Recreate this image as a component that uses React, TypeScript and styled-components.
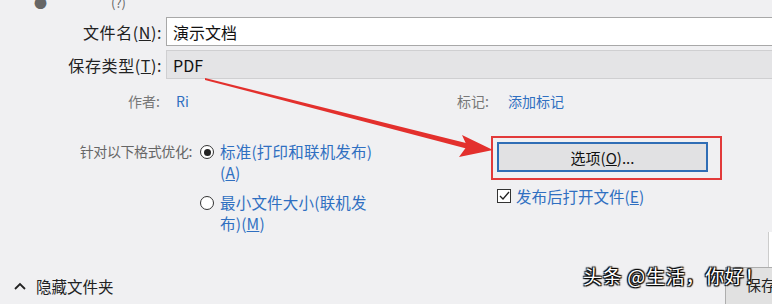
import React, { FC } from 'react';
import styled, { createGlobalStyle } from 'styled-components';

const GlobalStyle = createGlobalStyle`
  html, body {
    margin: 0;
    padding: 0;
    background: #f0f0f2;
  }
  body {
    font-family: "Noto Sans CJK SC", "Noto Sans", sans-serif;
  }
`;

const Dialog = styled.div`
  position: relative;
  width: 772px;
  height: 304px;
  overflow: hidden;
  background: #f0f0f2;
  color: #1a1a1a;
  font-size: 15px;
`;

const TopStrip = styled.div`
  height: 17px;
  display: flex;
  align-items: flex-start;
  padding-left: 34px;
  gap: 64px;
  color: #666;
  font-size: 13px;
  line-height: 6px;
  overflow: hidden;
`;

const FormGrid = styled.div`
  display: grid;
  grid-template-columns: 166px 1fr;
  row-gap: 4px;
`;

const Label = styled.div`
  display: flex;
  align-items: center;
  justify-content: flex-end;
  padding-right: 4px;
  color: #222;
  font-size: 16px;
  letter-spacing: 0.6px;
  white-space: pre;
`;

const Field = styled.div<{ $readonly?: boolean }>`
  height: 27px;
  display: flex;
  align-items: center;
  padding-left: 6px;
  background: ${(p) => (p.$readonly ? '#e4e4e6' : '#ffffff')};
  border: 1px solid ${(p) => (p.$readonly ? '#cfcfd1' : '#a8a8a8')};
  border-right: none;
  font-size: 16px;
  color: #111;
`;

const MetaRow = styled.div`
  display: grid;
  grid-template-columns: 166px 291px 51px 1fr;
  margin-top: 10px;
  height: 24px;
  align-items: center;
  font-size: 14px;
`;

const MetaLabel = styled.div<{ $align?: string }>`
  text-align: ${(p) => p.$align || 'right'};
  padding-right: ${(p) => (p.$align === 'left' ? '0' : '6px')};
  color: #777;
`;

const LinkText = styled.span<{ $indent?: number }>`
  color: #2f6fc1;
  padding-left: ${(p) => p.$indent ?? 10}px;
`;

const OptionsArea = styled.div`
  display: flex;
  margin-top: 24px;
`;

const OptionsLabel = styled.div`
  width: 196px;
  text-align: right;
  padding-right: 4px;
  color: #666;
  font-size: 14px;
  line-height: 21px;
  padding-top: 4px;
  letter-spacing: -0.4px;
  box-sizing: border-box;
`;

const RadioList = styled.div`
  width: 295px;
  display: flex;
  flex-direction: column;
  gap: 9px;
  padding-top: 4px;
`;

const RadioItem = styled.div`
  display: flex;
  align-items: flex-start;
  gap: 6px;
`;

const RadioCircle = styled.span<{ $checked?: boolean }>`
  flex: none;
  width: 12px;
  height: 12px;
  margin-top: 4px;
  margin-left: 4px;
  border: 1px solid #333;
  border-radius: 50%;
  background: #fff;
  display: flex;
  align-items: center;
  justify-content: center;
  &::after {
    content: '';
    display: ${(p) => (p.$checked ? 'block' : 'none')};
    width: 7px;
    height: 7px;
    border-radius: 50%;
    background: #222;
  }
`;

const RadioText = styled.span`
  width: 160px;
  color: #2f6fc1;
  font-size: 15.5px;
  line-height: 21px;
  letter-spacing: 0.2px;
`;

const Underline = styled.span`
  text-decoration: underline;
`;

const ActionColumn = styled.div`
  display: flex;
  flex-direction: column;
  gap: 5px;
`;

const Highlight = styled.div`
  width: 231px;
  height: 44px;
  border: 2px solid #e23a3a;
  box-sizing: border-box;
  padding: 4px 12px 6px 4px;
  margin-top: -1px;
`;

const OptionsButton = styled.button`
  width: 100%;
  height: 100%;
  border: 2px solid #2f6db5;
  background: #e1e1e3;
  font-family: inherit;
  font-size: 15px;
  color: #111;
  cursor: pointer;
  padding: 0;
`;

const CheckRow = styled.label`
  display: flex;
  align-items: center;
  gap: 5px;
  padding-left: 6px;
  color: #2f6fc1;
  font-size: 15.5px;
`;

const CheckBox = styled.span`
  width: 12px;
  height: 12px;
  border: 1px solid #333;
  background: #fff;
  display: flex;
  align-items: center;
  justify-content: center;
`;

const Footer = styled.div`
  position: absolute;
  left: 0;
  right: 0;
  bottom: 0;
  height: 38px;
  display: flex;
  align-items: center;
  justify-content: space-between;
`;

const Toggle = styled.div`
  display: flex;
  align-items: center;
  gap: 10px;
  padding-left: 14px;
  padding-top: 2px;
  font-size: 15.5px;
  color: #222;
`;

const SaveButton = styled.div`
  flex: none;
  width: 47px;
  height: 38px;
  margin-top: 2px;
  box-sizing: border-box;
  background: #e1e1e1;
  border: 1px solid #adadad;
  border-right: none;
  padding: 6px 0 0 20px;
  font-size: 15px;
  color: #222;
  white-space: nowrap;
  overflow: hidden;
`;

const Watermark = styled.div`
  position: absolute;
  left: 583px;
  top: 262px;
  font-size: 19px;
  color: #fff;
  letter-spacing: 0.7px;
  text-shadow: 0 0 2px #000, 1px 1px 1px #000, -1px -1px 1px #000, 1px -1px 1px #000, -1px 1px 1px #000;
`;

const SideEdge = styled.div`
  position: absolute;
  right: 0;
  top: 232px;
  width: 3px;
  height: 36px;
  background: #fff;
  border-left: 1px solid #ccc;
`;

const ArrowLayer = styled.svg`
  position: absolute;
  left: 0;
  top: 0;
  pointer-events: none;
`;

const App: FC = () => {
  return (
    <>
      <GlobalStyle />
      <Dialog>
        <TopStrip>
          <span>●</span>
          <span>(?)</span>
        </TopStrip>
        <FormGrid>
          <Label>
            <span>文件名(<Underline>N</Underline>):</span>
          </Label>
          <Field>演示文档</Field>
          <Label>
            <span>保存类型(<Underline>T</Underline>):</span>
          </Label>
          <Field $readonly>PDF</Field>
        </FormGrid>
        <MetaRow>
          <MetaLabel>作者:</MetaLabel>
          <LinkText>Ri</LinkText>
          <MetaLabel $align="left">标记:</MetaLabel>
          <LinkText $indent={0}>添加标记</LinkText>
        </MetaRow>
        <OptionsArea>
          <OptionsLabel>针对以下格式优化:</OptionsLabel>
          <RadioList>
            <RadioItem>
              <RadioCircle $checked />
              <RadioText>
                标准(打印和联机发布)<br />(<Underline>A</Underline>)
              </RadioText>
            </RadioItem>
            <RadioItem>
              <RadioCircle />
              <RadioText>
                最小文件大小(联机发布)(<Underline>M</Underline>)
              </RadioText>
            </RadioItem>
          </RadioList>
          <ActionColumn>
            <Highlight>
              <OptionsButton>
                选项(<Underline>O</Underline>)...
              </OptionsButton>
            </Highlight>
            <CheckRow>
              <CheckBox>
                <svg width="11" height="10" viewBox="0 0 11 10">
                  <path d="M1 5 L4 8 L10 1" fill="none" stroke="#222" strokeWidth="1.3" />
                </svg>
              </CheckBox>
              <span>发布后打开文件(<Underline>E</Underline>)</span>
            </CheckRow>
          </ActionColumn>
        </OptionsArea>
        <SideEdge />
        <Footer>
          <Toggle>
            <svg width="12" height="8" viewBox="0 0 12 8">
              <path d="M1 7 L6 2 L11 7" fill="none" stroke="#222" strokeWidth="1.8" />
            </svg>
            <span>隐藏文件夹</span>
          </Toggle>
          <SaveButton>保存</SaveButton>
        </Footer>
        <Watermark>头条 @生活，你好！</Watermark>
        <ArrowLayer width="772" height="304" viewBox="0 0 772 304">
          <polygon points="205,78 474,145 472,150 205,80" fill="#e3302d" />
          <polygon points="493,150 462,135 467,146 459,157" fill="#e3302d" />
        </ArrowLayer>
      </Dialog>
    </>
  );
};

export default App;
